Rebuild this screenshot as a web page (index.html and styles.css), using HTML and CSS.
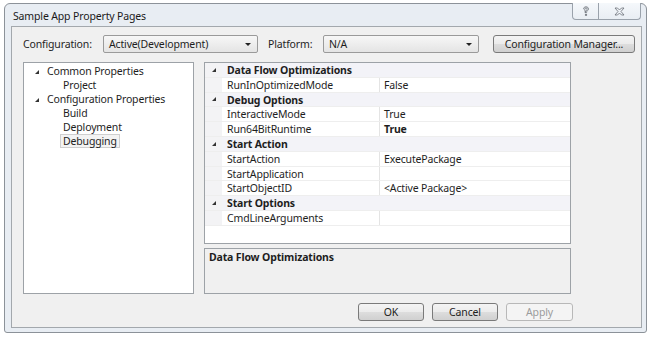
FILE: index.html
```html
<!DOCTYPE html>
<html>
<head>
<meta charset="utf-8">
<link rel="stylesheet" href="styles.css">
</head>
<body>
<div class="window">
  <div class="titlebar">
    <span class="title">Sample App Property Pages</span>
    <div class="caption">
      <div class="cbtn help">
        <svg width="8" height="11" viewBox="0 0 8 11"><path d="M1.5 3.2 C1.5 1.6 2.6 0.8 4 0.8 C5.5 0.8 6.5 1.7 6.5 3 C6.5 4.4 4.6 4.8 4.6 6.2 L4.6 7 M3.4 7 L3.4 6.2 C3.4 4.4 5.3 4.1 5.3 3 C5.3 2.3 4.8 1.9 4 1.9 C3.2 1.9 2.7 2.4 2.7 3.2 Z" fill="none" stroke="#6a6f76" stroke-width="0.8"/><rect x="3.3" y="8.2" width="1.4" height="1.4" fill="none" stroke="#6a6f76" stroke-width="0.7"/></svg>
      </div>
      <div class="cbtn close">
        <svg width="11" height="9" viewBox="0 0 11 9"><path d="M1 1 L3.5 1 L5.5 3 L7.5 1 L10 1 L7 4.5 L10 8 L7.5 8 L5.5 6 L3.5 8 L1 8 L4 4.5 Z" fill="none" stroke="#6a6f76" stroke-width="0.8"/></svg>
      </div>
    </div>
  </div>
  <div class="client">
    <div class="toolbar">
      <span class="label label-config">Configuration:</span>
      <div class="combo combo-config"><span>Active(Development)</span><span class="drop"></span></div>
      <span class="label label-platform">Platform:</span>
      <div class="combo combo-platform"><span>N/A</span><span class="drop"></span></div>
      <div class="btn btn-manager">Configuration Manager...</div>
    </div>
    <div class="main">
      <div class="tree">
        <div class="tnode"><span class="exp"></span>Common Properties</div>
        <div class="tnode child">Project</div>
        <div class="tnode"><span class="exp"></span>Configuration Properties</div>
        <div class="tnode child">Build</div>
        <div class="tnode child">Deployment</div>
        <div class="tnode child"><span class="sel">Debugging</span></div>
      </div>
      <div class="right">
        <div class="grid">
          <div class="row cat"><span class="gut"><span class="exp"></span></span><span class="name">Data Flow Optimizations</span></div>
          <div class="row prop"><span class="gut"></span><span class="name">RunInOptimizedMode</span><span class="val">False</span></div>
          <div class="row cat"><span class="gut"><span class="exp"></span></span><span class="name">Debug Options</span></div>
          <div class="row prop"><span class="gut"></span><span class="name">InteractiveMode</span><span class="val">True</span></div>
          <div class="row prop"><span class="gut"></span><span class="name">Run64BitRuntime</span><span class="val strong">True</span></div>
          <div class="row cat"><span class="gut"><span class="exp"></span></span><span class="name">Start Action</span></div>
          <div class="row prop"><span class="gut"></span><span class="name">StartAction</span><span class="val">ExecutePackage</span></div>
          <div class="row prop"><span class="gut"></span><span class="name">StartApplication</span><span class="val"></span></div>
          <div class="row prop"><span class="gut"></span><span class="name">StartObjectID</span><span class="val">&lt;Active Package&gt;</span></div>
          <div class="row cat"><span class="gut"><span class="exp"></span></span><span class="name">Start Options</span></div>
          <div class="row prop"><span class="gut"></span><span class="name">CmdLineArguments</span><span class="val"></span></div>
        </div>
        <div class="desc">Data Flow Optimizations</div>
      </div>
    </div>
    <div class="buttons">
      <div class="btn btn-ok">OK</div>
      <div class="btn btn-cancel">Cancel</div>
      <div class="btn btn-apply disabled">Apply</div>
    </div>
  </div>
</div>
</body>
</html>
```

FILE: styles.css
```css
html, body {
  margin: 0;
  padding: 0;
  background: #ffffff;
}
body {
  font-family: "Noto Sans", "Open Sans", sans-serif;
  font-size: 10.5px;
  letter-spacing: -0.15px;
  color: #1e1e1e;
}
.window {
  margin: 3px 0 0 4px;
  width: 643px;
  height: 330px;
  box-sizing: border-box;
  border: 1px solid #8c9299;
  border-radius: 6px 6px 3px 3px;
  background: #e8edf3;
  padding: 0 4px 4px 6px;
  display: flex;
  flex-direction: column;
}
.titlebar {
  height: 22px;
  display: flex;
  align-items: flex-start;
  justify-content: space-between;
  flex: none;
}
.title {
  margin-top: 5px;
  margin-left: 2px;
  color: #1a1a1a;
}
.caption {
  display: flex;
  margin-right: 1px;
  margin-top: -1px;
}
.cbtn {
  height: 16px;
  border: 1px solid #9aa2ab;
  border-top: none;
  background: linear-gradient(#f5f8fb, #e9eef3);
  display: flex;
  align-items: center;
  justify-content: center;
}
.help {
  width: 25px;
  border-radius: 0 0 0 4px;
}
.close {
  width: 41px;
  border-left: none;
  border-radius: 0 0 4px 0;
}
.client {
  flex: 1;
  border: 1px solid #a3a8ad;
  background: #f0f0f0;
  display: flex;
  flex-direction: column;
}
.toolbar {
  display: flex;
  align-items: center;
  padding: 8px 0 0 11px;
  height: 18px;
  flex: none;
}
.label-config {
  width: 80px;
}
.label-platform {
  margin-left: 10px;
  width: 55px;
}
.combo {
  height: 18px;
  box-sizing: border-box;
  border: 1px solid #9a9a9a;
  border-radius: 2px;
  background: linear-gradient(#f7f7f7, #e4e4e4);
  display: flex;
  align-items: center;
  justify-content: space-between;
  padding: 0 6px 0 5px;
}
.combo-config {
  width: 155px;
}
.combo-platform {
  width: 156px;
}
.drop {
  width: 0;
  height: 0;
  border-left: 3px solid transparent;
  border-right: 3px solid transparent;
  border-top: 3px solid #222;
}
.btn {
  height: 18px;
  box-sizing: border-box;
  border: 1px solid #7a7a7a;
  border-radius: 3px;
  background: linear-gradient(#f4f4f4 0%, #ebebeb 50%, #dddddd 51%, #d0d0d0 100%);
  display: flex;
  align-items: center;
  justify-content: center;
}
.btn-manager {
  margin-left: 14px;
  width: 142px;
}
.main {
  display: flex;
  margin-top: 9px;
  padding-left: 11px;
  gap: 10px;
  flex: none;
}
.tree {
  width: 171px;
  height: 232px;
  box-sizing: border-box;
  border: 1px solid #9da2a7;
  background: #ffffff;
  padding-top: 2px;
}
.tnode {
  height: 13.9px;
  line-height: 13.9px;
  display: flex;
  align-items: center;
  padding-left: 11px;
}
.tnode.child {
  padding-left: 39px;
}
.exp {
  display: inline-block;
  width: 0;
  height: 0;
  border-left: 4px solid transparent;
  border-bottom: 4px solid #333;
  margin-right: 8px;
}
.sel {
  border: 1px solid #cfcfcf;
  background: #f3f3f3;
  padding: 0 2px;
  margin-left: -3px;
  line-height: 12px;
}
.right {
  display: flex;
  flex-direction: column;
  gap: 4px;
  width: 367px;
}
.grid {
  height: 182px;
  box-sizing: border-box;
  border: 1px solid #9da2a7;
  background: #ffffff;
}
.row {
  display: flex;
  height: 14.8px;
  line-height: 14px;
  border-bottom: 1px solid #eeeeee;
  box-sizing: border-box;
}
.gut {
  width: 17px;
  flex: none;
  display: flex;
  align-items: center;
  justify-content: center;
  background: #f3f3f5;
}
.gut .exp {
  margin-right: 0;
}
.row.cat {
  background: #f3f3f8;
  font-weight: bold;
}
.row .name {
  padding-left: 5px;
}
.row.prop .name {
  width: 152px;
  flex: none;
  border-right: 1px solid #e4e4e4;
}
.row .val {
  padding-left: 4px;
}
.val.strong {
  font-weight: bold;
}
.desc {
  height: 46px;
  box-sizing: border-box;
  border: 1px solid #9da2a7;
  background: #f0f0f0;
  font-weight: bold;
  padding: 1px 4px;
}
.buttons {
  display: flex;
  margin-top: 9px;
  padding-left: 346px;
  flex: none;
}
.buttons .btn {
  height: 18px;
}
.btn-ok {
  width: 66px;
}
.btn-cancel {
  width: 66px;
  margin-left: 8px;
}
.btn-apply {
  width: 67px;
  margin-left: 8px;
}
.btn.disabled {
  border-color: #b8b8b8;
  background: #f4f4f4;
  color: #9c9c9c;
}
```
